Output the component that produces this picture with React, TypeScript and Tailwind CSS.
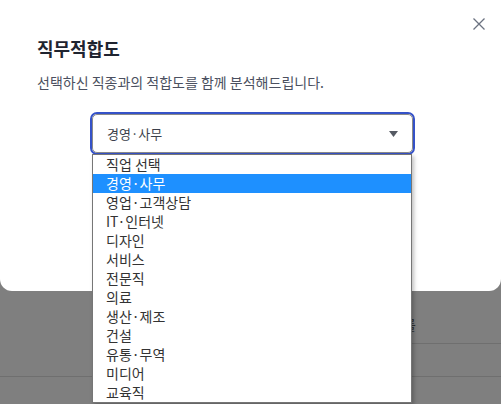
import React from 'react';

const jobs = [
  '직업 선택',
  '경영·사무',
  '영업·고객상담',
  'IT·인터넷',
  '디자인',
  '서비스',
  '전문직',
  '의료',
  '생산·제조',
  '건설',
  '유통·무역',
  '미디어',
  '교육직',
];

const font = { fontFamily: '"Noto Sans CJK KR", "Noto Sans", sans-serif' };

export default function App() {
  const selected = '경영·사무';

  return (
    <div className="relative h-[404px] w-[501px] overflow-hidden bg-[#7f7f7f]" style={font}>
      {/* page underneath the backdrop */}
      <div className="pt-[316px]">
        <div className="flex justify-end pr-[85px] text-[14px] leading-[16px] text-[#2e2e2e]">
          <span>결과를</span>
        </div>
        <div className="ml-[100px] mt-[11px] h-px bg-[#6f6f6f]" />
        <div className="mt-[32px] h-px bg-[#6f6f6f]" />
      </div>

      {/* modal */}
      <div className="absolute left-0 right-0 top-0 h-[291px] rounded-b-[12px] bg-white">
        <button className="absolute right-[16px] top-[18px] text-[#6b7280]">
          <svg width="12" height="12" viewBox="0 0 12 12" fill="none" stroke="currentColor" strokeWidth="1.3">
            <path d="M0.5 0.5 L11.5 11.5 M11.5 0.5 L0.5 11.5" />
          </svg>
        </button>

        <div className="px-[37px] pt-[36px]">
          <h2 className="text-[18px] font-bold leading-[24px] text-[#1f2430]">직무적합도</h2>
          <p className="mt-[13px] text-[14px] leading-[18px] text-[#4b5060]">
            선택하신 직종과의 적합도를 함께 분석해드립니다.
          </p>
        </div>

        <div className="relative ml-[90px] mt-[21px] w-[325px]">
          <div className="rounded-[7px] border-2 border-[#3552c8]">
            <div className="flex h-[39px] items-center justify-between rounded-[5px] border border-[#8a8a8a] pl-[14px] pr-[14px]">
              <span className="text-[13px] text-[#3a3f4a]">{selected}</span>
              <svg width="9" height="6" viewBox="0 0 9 6">
                <path d="M0 0 H9 L4.5 6 Z" fill="#555a63" />
              </svg>
            </div>
          </div>

          {/* open option list */}
          <ul className="absolute left-[2px] top-[42px] w-[320px] border border-[#767676] bg-white shadow-[2px_2px_4px_rgba(0,0,0,0.25)]">
            {jobs.map((job) => (
              <li
                key={job}
                className={
                  job === selected
                    ? 'h-[19px] bg-[#1e90ff] pl-[13px] text-[14px] leading-[19px] text-white'
                    : 'h-[19px] pl-[13px] text-[14px] leading-[19px] text-[#333]'
                }
              >
                {job}
              </li>
            ))}
          </ul>
        </div>
      </div>
    </div>
  );
}
